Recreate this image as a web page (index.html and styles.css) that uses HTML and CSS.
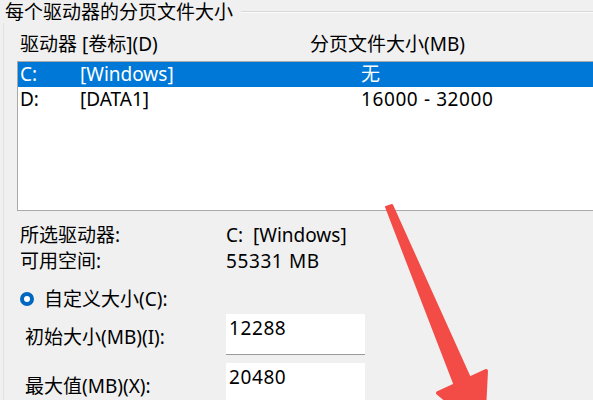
FILE: index.html
```html
<!DOCTYPE html>
<html lang="zh">
<head>
    <meta charset="UTF-8">
    <title>虚拟内存</title>
    <link rel="stylesheet" href="styles.css">
</head>
<body>

<!-- 对话框主体 -->
<div class="dialog">
    <!-- 分组标题 -->
    <div class="group-title">
        <span class="title-text">每个驱动器的分页文件大小</span>
        <span class="title-rule"></span>
    </div>

    <div class="group">
        <!-- 列表表头 -->
        <div class="list-head">
            <span class="col-drive">驱动器 [卷标](D)</span>
            <span>分页文件大小(MB)</span>
        </div>

        <!-- 驱动器列表 -->
        <div class="list">
            <div class="row selected">
                <span class="c1">C:</span>
                <span class="c2">[Windows]</span>
                <span>无</span>
            </div>
            <div class="row">
                <span class="c1">D:</span>
                <span class="c2">[DATA1]</span>
                <span class="num">16000 - 32000</span>
            </div>
        </div>

        <!-- 所选驱动器信息 -->
        <div class="info">
            <div class="info-row"><span class="info-label">所选驱动器:</span><span>C:&nbsp;&nbsp;[Windows]</span></div>
            <div class="info-row"><span class="info-label">可用空间:</span><span class="num">55331 MB</span></div>
        </div>

        <!-- 自定义大小 -->
        <div class="radio-row">
            <span class="radio"></span>
            <span>自定义大小(C):</span>
        </div>
        <div class="field-row">
            <span class="field-label">初始大小(MB)(I):</span>
            <div class="field-box num">12288</div>
        </div>
        <div class="field-row">
            <span class="field-label">最大值(MB)(X):</span>
            <div class="field-box num">20480</div>
        </div>
    </div>

    <!-- 红色标注箭头 -->
    <svg class="arrow" width="593" height="400" viewBox="0 0 593 400">
        <polygon points="386,207 392,205 470,378 455,386" fill="#f34b46" stroke="#f34b46" stroke-width="2" stroke-linejoin="round"/>
        <polygon points="438,393 486,371 483,430" fill="#f34b46" stroke="#f34b46" stroke-width="4" stroke-linejoin="round"/>
    </svg>
</div>

</body>
</html>
```

FILE: styles.css
```css
/* 页面整体 */
body {
    margin: 0;
    padding: 0;
    background-color: #f0f0f0;
    font-family: "Noto Sans", "Noto Sans CJK SC", sans-serif;
    font-size: 19px;
    color: #000;
    overflow: hidden;
}

.dialog {
    position: relative;
    width: 593px;
    height: 400px;
}

/* 数字稍宽一些 */
.num {
    letter-spacing: 0.6px;
}

/* 分组标题和横线 */
.group-title {
    display: flex;
    align-items: center;
    height: 22px;
    padding: 1px 0 0 5px;
}
.title-text {
    line-height: 22px;
}
.title-rule {
    flex: 1;
    margin-left: 8px;
    margin-top: 0;
    border-top: 1px solid #d8d8d8;
    border-bottom: 1px solid #fbfbfb;
}

.group {
    margin-left: 3px;
    border-left: 1px solid #e2e2e2;
    height: 377px;
}

/* 表头 */
.list-head {
    display: flex;
    line-height: 24px;
    padding: 9px 0 5px 16px;
}
.col-drive {
    width: 290px;
}

/* 列表框 */
.list {
    margin-left: 13px;
    height: 148px;
    background-color: #fff;
    border-top: 1px solid #a9a9a9;
    border-left: 1px solid #a9a9a9;
    border-bottom: 1px solid #a9a9a9;
}
.row {
    display: flex;
    height: 25px;
    line-height: 25px;
    padding-left: 2px;
}
.row.selected {
    background-color: #0078d7;
    color: #fff;
}
.c1 {
    width: 60px;
}
.c2 {
    width: 281px;
}

/* 驱动器信息 */
.info {
    margin-top: 11px;
    padding-left: 16px;
}
.info-row {
    display: flex;
    line-height: 26px;
}
.info-label {
    width: 206px;
}

/* 单选按钮 */
.radio-row {
    display: flex;
    align-items: center;
    margin-top: 12px;
    padding-left: 16px;
    line-height: 26px;
}
.radio {
    box-sizing: border-box;
    width: 14px;
    height: 14px;
    border-radius: 50%;
    background-color: #0067c0;
    border: 4px solid #0067c0;
    margin-right: 10px;
    position: relative;
}
.radio::after {
    content: "";
    position: absolute;
    left: 0;
    top: 0;
    width: 6px;
    height: 6px;
    border-radius: 50%;
    background-color: #fff;
}

/* 输入框 */
.field-row {
    display: flex;
    align-items: center;
    margin-top: 2px;
    padding-left: 21px;
}
.field-row + .field-row {
    margin-top: 8px;
}
.field-label {
    width: 201px;
    padding-top: 5px;
    line-height: 24px;
}
.field-box {
    box-sizing: border-box;
    width: 139px;
    height: 41px;
    background-color: #fff;
    border-bottom: 1px solid #9a9a9a;
    padding-left: 3px;
    line-height: 24px;
    padding-top: 2px;
}

/* 标注箭头 */
.arrow {
    position: absolute;
    left: 0;
    top: 0;
}
```
